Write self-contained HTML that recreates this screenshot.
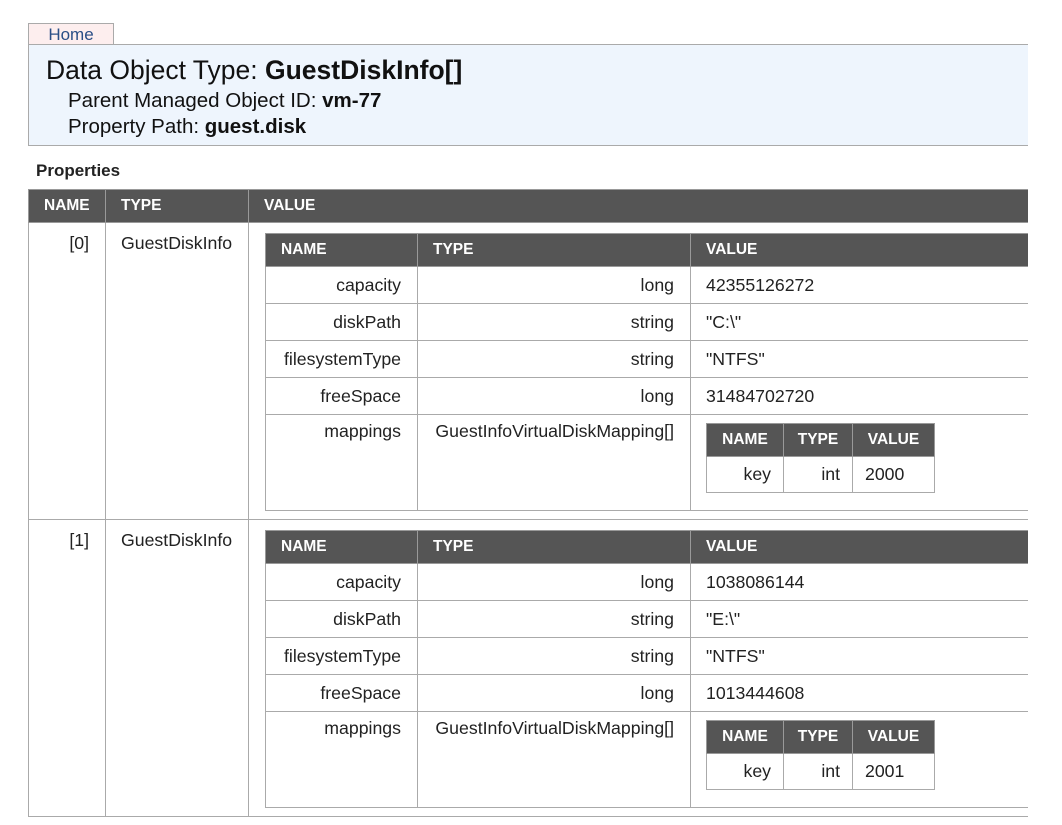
<!DOCTYPE html>
<html><head><meta charset="utf-8"><style>
body{margin:0;background:#fff;font-family:"Liberation Sans",Arial,sans-serif;color:#222;}
#clip{position:absolute;left:0;top:0;width:1028px;height:825px;overflow:hidden;}
.tab{position:absolute;left:28px;top:23px;width:84px;height:21px;background:#fdeeee;border:1px solid #aaa;border-bottom:none;color:#2a4e86;font-size:17px;text-align:center;line-height:22px;}
.hdr{position:absolute;left:28px;top:44px;width:1100px;height:100px;background:#eef5fd;border:1px solid #aaa;}
.t1{position:absolute;left:17px;top:10px;font-size:26.5px;color:#111;white-space:nowrap;}
.t2{position:absolute;left:39px;font-size:20.5px;color:#111;white-space:nowrap;}
.props{position:absolute;left:36px;top:161px;font-size:17px;font-weight:bold;}
table{border-collapse:collapse;table-layout:fixed;}
td,th{border:1px solid #aaa;font-size:17.7px;padding:0 16px 0 15px;vertical-align:top;white-space:nowrap;}
th{background:#555;color:#fff;font-size:15.5px;text-align:left;height:32px;vertical-align:middle;border-color:#999;}
.outer{position:absolute;left:28px;top:189px;width:1200px;}
.outer>tbody>tr>td{padding-top:10px;}
.r{text-align:right;}
.inner{width:900px;margin:0 0 8px 0;}
.inner td{height:36px;vertical-align:middle;}
.inner td.m{vertical-align:top;padding-top:6px;height:89px;}
.mini{width:229px;margin-top:2px;}
.mini th{text-align:center;padding:0;height:32px;}
.mini td{height:35px;padding:0 12px;}
.outer td.v{padding:10px 0 0 16px;}
</style></head><body><div id="clip">
<div class="tab">Home</div>
<div class="hdr">
<div class="t1">Data Object Type: <b>GuestDiskInfo[]</b></div>
<div class="t2" style="top:44px">Parent Managed Object ID: <b>vm-77</b></div>
<div class="t2" style="top:70px">Property Path: <b>guest.disk</b></div>
</div>
<div class="props">Properties</div>
<table class="outer">
<colgroup><col style="width:77px"><col style="width:143px"><col></colgroup>
<tr><th>NAME</th><th>TYPE</th><th>VALUE</th></tr>
<tr><td class="r" style="height:285px">[0]</td><td>GuestDiskInfo</td><td class="v">
<table class="inner"><colgroup><col style="width:152px"><col style="width:273px"><col></colgroup>
<tr><th>NAME</th><th>TYPE</th><th>VALUE</th></tr>
<tr><td class="r">capacity</td><td class="r">long</td><td>42355126272</td></tr>
<tr><td class="r">diskPath</td><td class="r">string</td><td>"C:\"</td></tr>
<tr><td class="r">filesystemType</td><td class="r">string</td><td>"NTFS"</td></tr>
<tr><td class="r">freeSpace</td><td class="r">long</td><td>31484702720</td></tr>
<tr><td class="r m">mappings</td><td class="r m">GuestInfoVirtualDiskMapping[]</td><td class="m" style="padding-left:15px">
<table class="mini"><colgroup><col style="width:77px"><col style="width:69px"><col></colgroup>
<tr><th>NAME</th><th>TYPE</th><th>VALUE</th></tr>
<tr><td class="r">key</td><td class="r">int</td><td>2000</td></tr></table>
</td></tr></table>
</td></tr>
<tr><td class="r" style="height:285px">[1]</td><td>GuestDiskInfo</td><td class="v">
<table class="inner"><colgroup><col style="width:152px"><col style="width:273px"><col></colgroup>
<tr><th>NAME</th><th>TYPE</th><th>VALUE</th></tr>
<tr><td class="r">capacity</td><td class="r">long</td><td>1038086144</td></tr>
<tr><td class="r">diskPath</td><td class="r">string</td><td>"E:\"</td></tr>
<tr><td class="r">filesystemType</td><td class="r">string</td><td>"NTFS"</td></tr>
<tr><td class="r">freeSpace</td><td class="r">long</td><td>1013444608</td></tr>
<tr><td class="r m">mappings</td><td class="r m">GuestInfoVirtualDiskMapping[]</td><td class="m" style="padding-left:15px">
<table class="mini"><colgroup><col style="width:77px"><col style="width:69px"><col></colgroup>
<tr><th>NAME</th><th>TYPE</th><th>VALUE</th></tr>
<tr><td class="r">key</td><td class="r">int</td><td>2001</td></tr></table>
</td></tr></table>
</td></tr>
</table>
</div></body></html>
